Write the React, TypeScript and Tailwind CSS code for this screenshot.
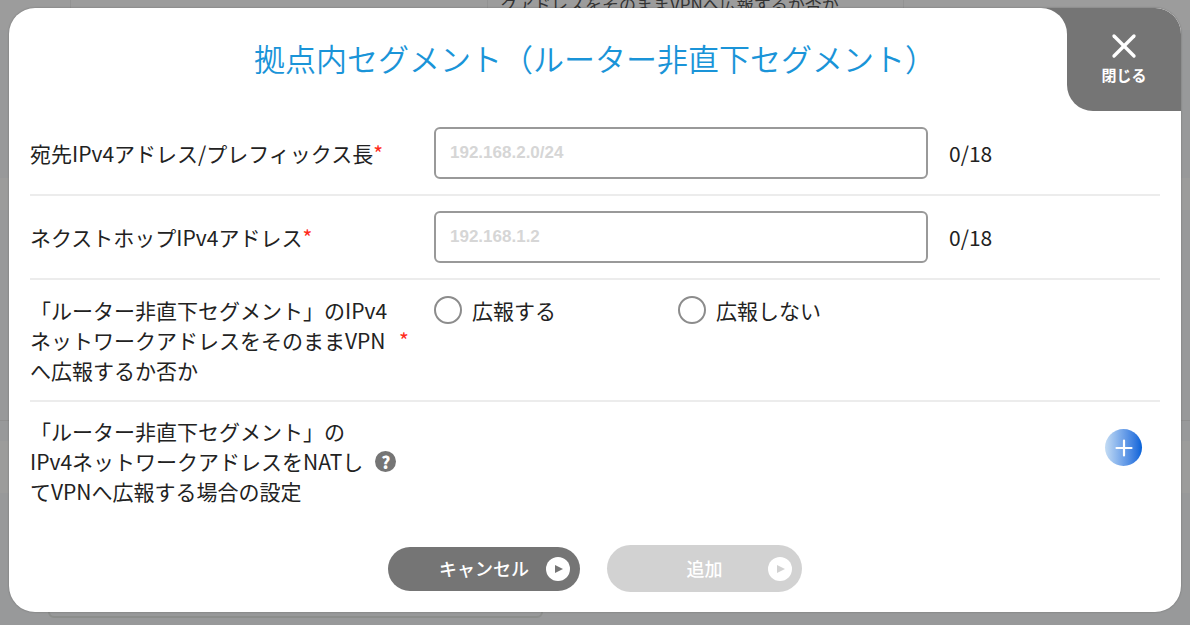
import { useState } from 'react'
import { X } from 'lucide-react'

const fontStack = "font-['Noto_Sans_CJK_JP','Noto_Sans',sans-serif]"

interface AddressRowProps {
  id: string
  label: string
  placeholder: string
}

function Required() {
  return <span className="text-[#ff2a1a]">*</span>
}

function AddressRow({ id, label, placeholder }: AddressRowProps) {
  const [value, setValue] = useState('')
  return (
    <div className="flex items-center border-b-2 border-[#ececec] py-[15px]">
      <label htmlFor={id} className="w-[404px] shrink-0 text-[21px] leading-[28px]">
        {label}
        <Required />
      </label>
      <input
        id={id}
        type="text"
        maxLength={18}
        value={value}
        onChange={(e) => setValue(e.target.value)}
        placeholder={placeholder}
        className="h-[52px] w-[494px] min-w-0 rounded-md border-2 border-[#999] px-[14px] font-['Liberation_Sans',Arial,sans-serif] text-[17px] placeholder:font-bold placeholder:text-[#d6d6d6]"
      />
      <span className="ml-[21px] text-[21px] leading-[28px]">{value.length}/18</span>
    </div>
  )
}

function Radio({ label, value }: { label: string; value: string }) {
  return (
    <label className="flex w-[244px] items-center gap-[10px] text-[21px] leading-[30px]">
      <input
        type="radio"
        name="advertise"
        value={value}
        className="size-7 shrink-0 appearance-none rounded-full border-2 border-[#8c8c8c] bg-white checked:border-8"
      />
      {label}
    </label>
  )
}

function PlayBadge({ className }: { className: string }) {
  return (
    <svg viewBox="0 0 24 24" className={`absolute right-[10px] size-6 ${className}`} aria-hidden="true">
      <circle cx="12" cy="12" r="12" fill="#fff" />
      <path d="M9 8l8 4-8 4z" fill="currentColor" />
    </svg>
  )
}

function PageBehind() {
  return (
    <div className="absolute inset-0 flex flex-col overflow-hidden bg-[#98999a] text-[17px] leading-[17px] text-[#333]" aria-hidden="true">
      <div className="flex h-[30px] shrink-0 bg-[#9c9c9c]">
        <div className="w-[71px] border-r border-[#939393]" />
        <div className="w-[417px] border-r border-[#939393]" />
        <div className="w-[416px] border-r border-[#939393] pl-3">
          <p className="-mt-[5px]">クアドレスをそのままVPNへ広報するか否か</p>
        </div>
      </div>
      <div className="h-[148px] shrink-0" />
      <div className="h-[32px] shrink-0 bg-[#9c9c9b]" />
      <div className="h-[211px] shrink-0 border-b border-[#8f8f8f]" />
      <div className="h-[20px] shrink-0" />
      <div className="h-[52px] shrink-0 bg-[#9c9c9b]" />
      <div className="ml-[48px] h-[125px] w-[495px] shrink-0 rounded-md border-2 border-[#8c8e8c]" />
    </div>
  )
}

export default function App() {
  return (
    <div className={`relative flex min-h-screen items-start pt-2 pr-[9px] pb-3 pl-[9px] text-[#222] ${fontStack}`}>
      <PageBehind />
      <section
        role="dialog"
        aria-labelledby="dialog-title"
        className="relative w-full overflow-hidden rounded-[26px] bg-white px-[21px] pb-5 shadow-[0_0_2px_rgba(0,0,0,0.3)]"
      >
        <div className="absolute top-0 right-0 bg-[#757575]">
          <div className="absolute top-0 right-full size-[26px] bg-[#757575]">
            <div className="size-full rounded-tr-[26px] bg-white" />
          </div>
          <div className="bg-white">
            <button
              type="button"
              className="flex h-[103px] w-[114px] flex-col items-center rounded-bl-[26px] bg-[#757575] pt-[18px] text-[15px] leading-[22px] font-bold text-white"
            >
              <X size={40} strokeWidth={2} className="-mb-[2px]" />
              閉じる
            </button>
          </div>
        </div>
        <h1 id="dialog-title" className="pt-[28px] text-center text-[31px] leading-[44px] font-[350] text-[#1a94d8]">
          拠点内セグメント（ルーター非直下セグメント）
        </h1>
        <form className="mt-[32px]" onSubmit={(e) => e.preventDefault()}>
          <AddressRow id="destination" label="宛先IPv4アドレス/プレフィックス長" placeholder="192.168.2.0/24" />
          <AddressRow id="next-hop" label="ネクストホップIPv4アドレス" placeholder="192.168.1.2" />
          <fieldset className="flex border-b-2 border-[#ececec] pt-[15px] pb-[15px]" aria-labelledby="advertise-label">
            <div className="flex w-[404px] shrink-0 items-center gap-3 text-[21px] leading-[30px]">
              <p id="advertise-label">
                「ルーター非直下セグメント」のIPv4
                <br />
                ネットワークアドレスをそのままVPN
                <br />
                へ広報するか否か
              </p>
              <Required />
            </div>
            <div className="flex items-start">
              <Radio label="広報する" value="yes" />
              <Radio label="広報しない" value="no" />
            </div>
          </fieldset>
          <div className="flex justify-between pt-[14px] pb-4">
            <div className="flex items-center gap-3 text-[21px] leading-[30px]">
              <p>
                「ルーター非直下セグメント」の
                <br />
                IPv4ネットワークアドレスをNATし
                <br />
                てVPNへ広報する場合の設定
              </p>
              <button
                type="button"
                aria-label="ヘルプ"
                className="flex size-[21px] items-center justify-center rounded-full bg-[#757575] text-[17px] leading-none font-black text-white"
              >
                ?
              </button>
            </div>
            <button
              type="button"
              aria-label="設定を追加"
              className="mt-[13px] mr-[18px] flex size-[37px] items-center justify-center rounded-full bg-linear-to-r from-[#c4dcf3] to-[#0061d8] text-white"
            >
              <svg viewBox="0 0 18 18" className="size-[18px]" stroke="currentColor" strokeWidth="2.2" strokeLinecap="round" aria-hidden="true">
                <path d="M9 1.5v15M1.5 9h15" />
              </svg>
            </button>
          </div>
          <div className="mt-[23px] flex items-center justify-center gap-[27px]">
            <button
              type="button"
              className="relative flex h-11 w-[192px] items-center justify-center rounded-full bg-[#757575] text-[18px] font-medium text-white"
            >
              キャンセル
              <PlayBadge className="text-[#757575]" />
            </button>
            <button
              type="submit"
              disabled
              className="relative flex h-[47px] w-[195px] items-center justify-center rounded-full bg-[#d2d2d2] text-[18px] font-medium text-white"
            >
              追加
              <PlayBadge className="text-[#d2d2d2]" />
            </button>
          </div>
        </form>
      </section>
    </div>
  )
}
